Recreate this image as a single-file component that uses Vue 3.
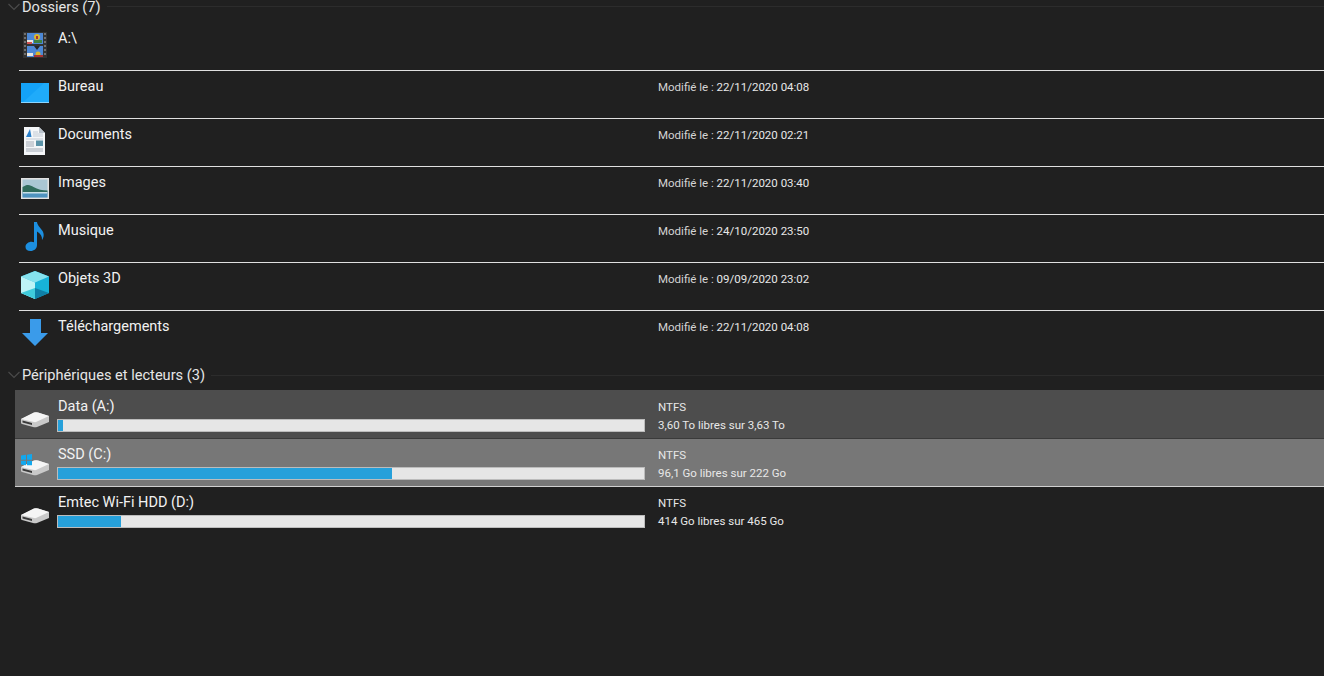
<script setup>
const folders = [
  { name: 'A:\\', icon: 'video', date: '' },
  { name: 'Bureau', icon: 'desktop', date: '22/11/2020 04:08' },
  { name: 'Documents', icon: 'doc', date: '22/11/2020 02:21' },
  { name: 'Images', icon: 'image', date: '22/11/2020 03:40' },
  { name: 'Musique', icon: 'music', date: '24/10/2020 23:50' },
  { name: 'Objets 3D', icon: 'cube', date: '09/09/2020 23:02' },
  { name: 'Téléchargements', icon: 'down', date: '22/11/2020 04:08' }
]
const drives = [
  { name: 'Data (A:)', fs: 'NTFS', free: '3,60 To libres sur 3,63 To', pct: 0.85, cls: 'sel', win: false },
  { name: 'SSD (C:)', fs: 'NTFS', free: '96,1 Go libres sur 222 Go', pct: 57, cls: 'hot', win: true },
  { name: 'Emtec Wi-Fi HDD (D:)', fs: 'NTFS', free: '414 Go libres sur 465 Go', pct: 10.8, cls: '', win: false }
]
</script>

<template>
  <div class="page">
    <div class="head first">
      <svg class="chev" width="14" height="8" viewBox="0 0 14 8"><path d="M1.500 1l5.500 5.500L12.500 1" fill="none" stroke="#4a4a4a" stroke-width="1.2"/></svg>
      <span class="title">Dossiers (7)</span>
      <span class="rule"></span>
    </div>
    <div class="list">
      <div v-for="f in folders" :key="f.name" class="row">
        <div class="ico">
          <svg width="32" height="32" viewBox="0 0 32 32">
            <template v-if="f.icon === 'video'">
              <rect x="4" y="4" width="24" height="26" fill="#333"/>
              <rect x="8" y="5" width="16" height="11" fill="#4d88d6"/>
              <rect x="8" y="18" width="16" height="11" fill="#4d88d6"/>
              <rect x="8" y="12" width="6" height="3" fill="#e8e6e0"/>
              <rect x="8" y="25" width="6" height="3" fill="#e8e6e0"/>
              <rect x="8" y="14" width="5" height="2" fill="#d05050"/>
              <circle cx="18" cy="9" r="3" fill="#d9b72c"/>
              <rect x="15" y="12" width="8" height="3" fill="#3f8040"/>
              <rect x="17" y="8" width="2" height="3" fill="#a33"/>
              <path d="M15 18h6l-3 4z" fill="#262626"/>
              <circle cx="19" cy="26" r="2.500" fill="#d9b72c"/>
              <rect x="15" y="27" width="9" height="2" fill="#a33"/>
              <path d="M6 5v24M26 5v24" stroke="#8a8a8a" stroke-width="1.400" stroke-dasharray="2 2"/>
            </template>
            <template v-else-if="f.icon === 'desktop'">
              <rect x="2" y="7" width="28" height="20" fill="#14a2f7"/>
              <path d="M4 26.300L25 7h5v20z" fill="#1fabfa"/>
              <path d="M2 26.200h28v.8H2z" fill="#a8e0ff"/>
            </template>
            <template v-else-if="f.icon === 'doc'">
              <path d="M5 3h15l6 6v22H5z" fill="#f4f6f8"/>
              <path d="M20 3l6 6h-6z" fill="#b9c3cc"/>
              <path d="M7 13l4-8 1.500 8z" fill="#2a7fc9"/>
              <path d="M14 8h5M14 10h10M14 12h10M7 15h17" stroke="#b6c2cc" stroke-width=".8"/>
              <rect x="17" y="16.500" width="7" height="5.500" fill="#5b93a8"/>
              <path d="M7 18h8M7 20h8M7 22h8M7 25h17M7 27h17" stroke="#8f9ba5" stroke-width=".8"/>
            </template>
            <template v-else-if="f.icon === 'image'">
              <rect x="2" y="6" width="28" height="21" fill="#e2e2e2"/>
              <rect x="3.500" y="7.500" width="25" height="18" fill="#a9c6d4"/>
              <path d="M3.500 15c5-3.500 8-2 11 0 4 2.500 9 3.500 14 3.500v3h-25z" fill="#2f6b5c"/>
              <path d="M3.500 20h25v5.500h-25z" fill="#4f93bf"/>
              <path d="M3.500 20h25v1.500h-25z" fill="#c9dfe6"/>
            </template>
            <template v-else-if="f.icon === 'music'">
              <path d="M15 2h3c.6 4 3.500 5.500 5.800 9.500 1.700 3.200.7 6.500-.8 8.500.3-3.500-1.300-6.500-5-8.500V25c0 3.800-3 6-6.500 6-3 0-5-1.600-5-4 0-3 3-5.200 6-5.200 1 0 1.800.2 2.500.5z" fill="#1c8fe0"/>
            </template>
            <template v-else-if="f.icon === 'cube'">
              <path d="M16 3l14 5.500V25l-14 6-14-6V8.500z" fill="#17b2d8"/>
              <path d="M16 3l14 5.500-14 6-14-6z" fill="#86e2ee"/>
              <path d="M2 8.500l14 6V31L2 25z" fill="#bdf3f6"/>
              <path d="M16 20l14 5-14 6z" fill="#0f7fa6"/>
              <path d="M16 20L2 25l14 6z" fill="#3fcbdb"/>
            </template>
            <template v-else-if="f.icon === 'down'">
              <path d="M11 3h11v14h7L16 30 3 17h8z" fill="#3a9bea"/>
            </template>
          </svg>
        </div>
        <div class="name">{{ f.name }}</div>
        <div v-if="f.date" class="meta date"><span class="label">Modifié le :</span> {{ f.date }}</div>
      </div>
    </div>
    <div class="head second">
      <svg class="chev" width="14" height="8" viewBox="0 0 14 8"><path d="M1.500 1l5.500 5.500L12.500 1" fill="none" stroke="#4a4a4a" stroke-width="1.2"/></svg>
      <span class="title">Périphériques et lecteurs (3)</span>
      <span class="rule"></span>
    </div>
    <div class="drives">
      <div v-for="d in drives" :key="d.name" class="drive" :class="d.cls">
        <div class="ico">
          <svg width="32" height="32" viewBox="0 0 32 32">
            <path d="M2 16L15 9.500q2-.5 4 0L30 13v6l-12 5q-2 .5-4 0L3 21q-1-.5-1-1z" fill="#c9c9c9"/>
            <path d="M2 16L15 9.500q2-.5 4 0L30 13 17 19q-1 .3-2 0z" fill="#f5f5f5"/>
            <path d="M3.500 17.500L13 20v2l-9.500-2.500z" fill="#3a3a3a"/>
            <template v-if="d.win">
              <path d="M2 4.500l5-.7v5H2zM8 3.700L13 3v5.800H8zM2 9.800h5v4.500l-5-.7zM8 9.800h5v4.500H8z" fill="#11a8ee"/>
            </template>
          </svg>
        </div>
        <div class="mid">
          <div class="name">{{ d.name }}</div>
          <div class="bar"><div class="fill" :style="{ width: d.pct + '%' }"></div></div>
        </div>
        <div class="meta">
          <div>{{ d.fs }}</div>
          <div>{{ d.free }}</div>
        </div>
      </div>
    </div>
  </div>
</template>

<style scoped>
.page { width: 1324px; height: 676px; background: #202020; color: #f2f2f2; font-family: Roboto, "Noto Sans", sans-serif; overflow: hidden; box-sizing: border-box; }
.head { display: flex; align-items: center; height: 17px; padding-left: 7px; }
.head.first { transform: translateY(-1px); margin-top: -1px; }
.head.second { margin-top: 8px; height: 18px; margin-bottom: 6px; }
.chev { margin-right: 1px; flex: none; }
.title { font-size: 14.6px; color: #e6e6e6; margin-right: 6px; white-space: nowrap; }
.rule { flex: 1; height: 1px; background: #2c2c2c; }
.list { margin-left: 19px; margin-top: 7px; }
.row { display: flex; height: 47px; border-bottom: 1px solid #e0e0e0; }
.row:last-child { border-bottom: none; }
.row .ico { padding-top: 5px; }
.row .name { width: 600px; font-size: 14.5px; margin-left: 7px; padding-top: 6px; line-height: 20px; }
.ico { width: 32px; flex: none; }
.date { padding-top: 8px; }
.label { color: #d4d4d4; }
.meta { font-size: 11.5px; color: #e8e8e8; line-height: 17px; }
.drives { margin-left: 15px; }
.drive { display: flex; height: 48px; box-sizing: border-box; padding-left: 4px; }
.drive.sel { height: 49px; padding-top: 1px; background: #4d4d4d; border-bottom: 1px solid #3a3a3a; }
.drive.hot { background: #777777; border-bottom: 1px solid #d0d0d0; }
.drive .ico { padding-top: 12px; }
.mid { width: 588px; margin-left: 6px; margin-right: 13px; }
.mid .name { font-size: 14.5px; line-height: 20px; margin-left: 1px; padding-top: 6px; }
.bar { height: 13px; margin-top: 2px; background: #e6e6e6; box-sizing: border-box; border: 1px solid #bcbcbc; }
.fill { height: 100%; background: #26a0da; }
.drive .meta { padding-top: 7px; line-height: 18px; }
</style>
